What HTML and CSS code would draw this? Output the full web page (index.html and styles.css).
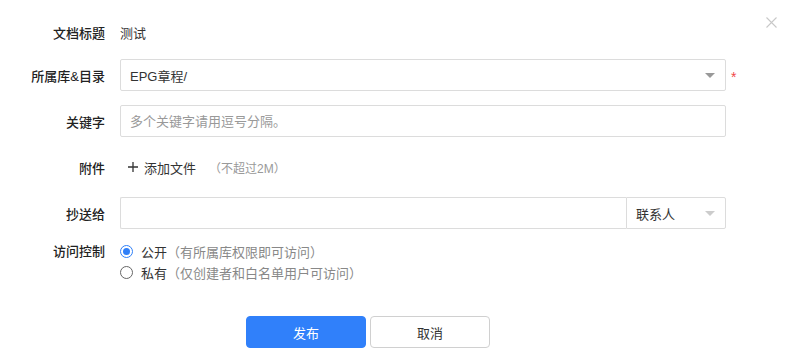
FILE: index.html
```html
<!DOCTYPE html>
<html lang="zh-CN">

<head>
    <meta charset="UTF-8">
    <meta name="viewport" content="width=device-width, initial-scale=1.0">
    <title>发布文档</title>
    <link rel="stylesheet" href="styles.css">
</head>

<body>
    <div class="dialog">
        <span class="close" title="关闭">
            <svg width="11" height="11" viewBox="0 0 11 11">
                <path d="M0.5 0.5 L10.5 10.5 M10.5 0.5 L0.5 10.5" stroke="#c8c8c8" stroke-width="1.1" fill="none"/>
            </svg>
        </span>

        <div class="form">
            <div class="row row-title">
                <label class="label">文档标题</label>
                <div class="field">
                    <span class="value">测试</span>
                </div>
            </div>

            <div class="row">
                <label class="label">所属库&amp;目录</label>
                <div class="field">
                    <div class="select">
                        <span>EPG章程/</span>
                        <i class="caret"></i>
                    </div>
                    <span class="required">*</span>
                </div>
            </div>

            <div class="row">
                <label class="label">关键字</label>
                <div class="field">
                    <input class="input" type="text" placeholder="多个关键字请用逗号分隔。">
                </div>
            </div>

            <div class="row">
                <label class="label">附件</label>
                <div class="field">
                    <a class="add-file" href="#">
                        <svg width="10" height="10" viewBox="0 0 10 10">
                            <path d="M5 0 V10 M0 5 H10" stroke="#333" stroke-width="1.3" fill="none"/>
                        </svg>
                        添加文件
                    </a>
                    <span class="hint">（不超过2M）</span>
                </div>
            </div>

            <div class="row">
                <label class="label">抄送给</label>
                <div class="field">
                    <div class="cc">
                        <input class="cc-input" type="text">
                        <div class="cc-select">
                            <span>联系人</span>
                            <i class="caret caret-light"></i>
                        </div>
                    </div>
                </div>
            </div>

            <div class="row row-radio">
                <label class="label">访问控制</label>
                <div class="radios">
                    <label class="radio">
                        <span class="dot checked"></span>
                        公开<em>（有所属库权限即可访问）</em>
                    </label>
                    <label class="radio">
                        <span class="dot"></span>
                        私有<em>（仅创建者和白名单用户可访问）</em>
                    </label>
                </div>
            </div>

            <div class="actions">
                <button class="btn btn-primary">发布</button>
                <button class="btn">取消</button>
            </div>
        </div>
    </div>
</body>

</html>
```

FILE: styles.css
```css
* {
    box-sizing: border-box;
}

body {
    margin: 0;
    background: #fff;
    font-family: "Liberation Sans", "Noto Sans CJK SC", sans-serif;
    font-size: 13px;
    color: #333;
}

.dialog {
    position: relative;
    width: 787px;
    height: 360px;
}

.close {
    position: absolute;
    top: 17px;
    left: 766px;
    width: 11px;
    height: 11px;
    display: block;
    line-height: 0;
}

.form {
    padding-top: 16px;
    display: flex;
    flex-direction: column;
    gap: 14px;
}

.row {
    display: flex;
    align-items: center;
    height: 32px;
}

.row-title {
    margin-bottom: -3px;
}

.label {
    width: 105px;
    text-align: right;
    font-weight: 500;
    color: #222;
    margin-right: 15px;
    flex-shrink: 0;
}

.field {
    display: flex;
    align-items: center;
}

.value {
    color: #333;
}

.select,
.input {
    width: 606px;
    height: 32px;
    border: 1px solid #dcdcdc;
    border-radius: 2px;
    background: #fff;
}

.select {
    display: flex;
    align-items: center;
    justify-content: space-between;
    padding: 0 10px 0 9px;
    color: #333;
}

.input {
    padding: 0 9px;
    font: inherit;
    color: #333;
    outline: none;
}

.input::placeholder {
    color: #999;
}

.caret {
    width: 0;
    height: 0;
    border-left: 5px solid transparent;
    border-right: 5px solid transparent;
    border-top: 5px solid #999;
}

.caret-light {
    border-top-color: #ccc;
}

.required {
    color: #f04848;
    margin-left: 5px;
    font-size: 14px;
    line-height: 1;
    padding-top: 4px;
}

.add-file {
    display: flex;
    align-items: center;
    gap: 6px;
    margin-left: 8px;
    color: #333;
    text-decoration: none;
}

.hint {
    color: #999;
    font-size: 12px;
    margin-left: 13px;
}

.cc {
    display: flex;
    width: 606px;
    height: 32px;
}

.cc-input {
    width: 506px;
    height: 32px;
    border: 1px solid #dcdcdc;
    border-right: none;
    border-radius: 2px 0 0 2px;
    outline: none;
}

.cc-select {
    width: 100px;
    height: 32px;
    border: 1px solid #dcdcdc;
    border-radius: 0 2px 2px 0;
    display: flex;
    align-items: center;
    justify-content: space-between;
    padding: 0 10px 0 9px;
}

.row-radio {
    height: auto;
    align-items: flex-start;
    margin-top: -2px;
}

.row-radio .label {
    line-height: 21px;
}

.radios {
    display: flex;
    flex-direction: column;
}

.radio {
    display: flex;
    align-items: center;
    height: 21px;
    color: #333;
}

.radio em {
    font-style: normal;
    color: #888;
}

.dot {
    width: 13px;
    height: 13px;
    border: 1px solid #666;
    border-radius: 50%;
    margin-right: 8px;
    position: relative;
}

.dot.checked {
    border-color: #2f7ff8;
}

.dot.checked::after {
    content: "";
    position: absolute;
    left: 2px;
    top: 2px;
    width: 7px;
    height: 7px;
    border-radius: 50%;
    background: #2f7ff8;
}

.actions {
    display: flex;
    gap: 4px;
    padding-left: 246px;
    margin-top: 19px;
}

.btn {
    width: 120px;
    height: 32px;
    border: 1px solid #d0d0d0;
    border-radius: 4px;
    background: #fff;
    font: inherit;
    color: #333;
}

.btn-primary {
    background: #3080fa;
    border-color: #3080fa;
    color: #fff;
}
```
